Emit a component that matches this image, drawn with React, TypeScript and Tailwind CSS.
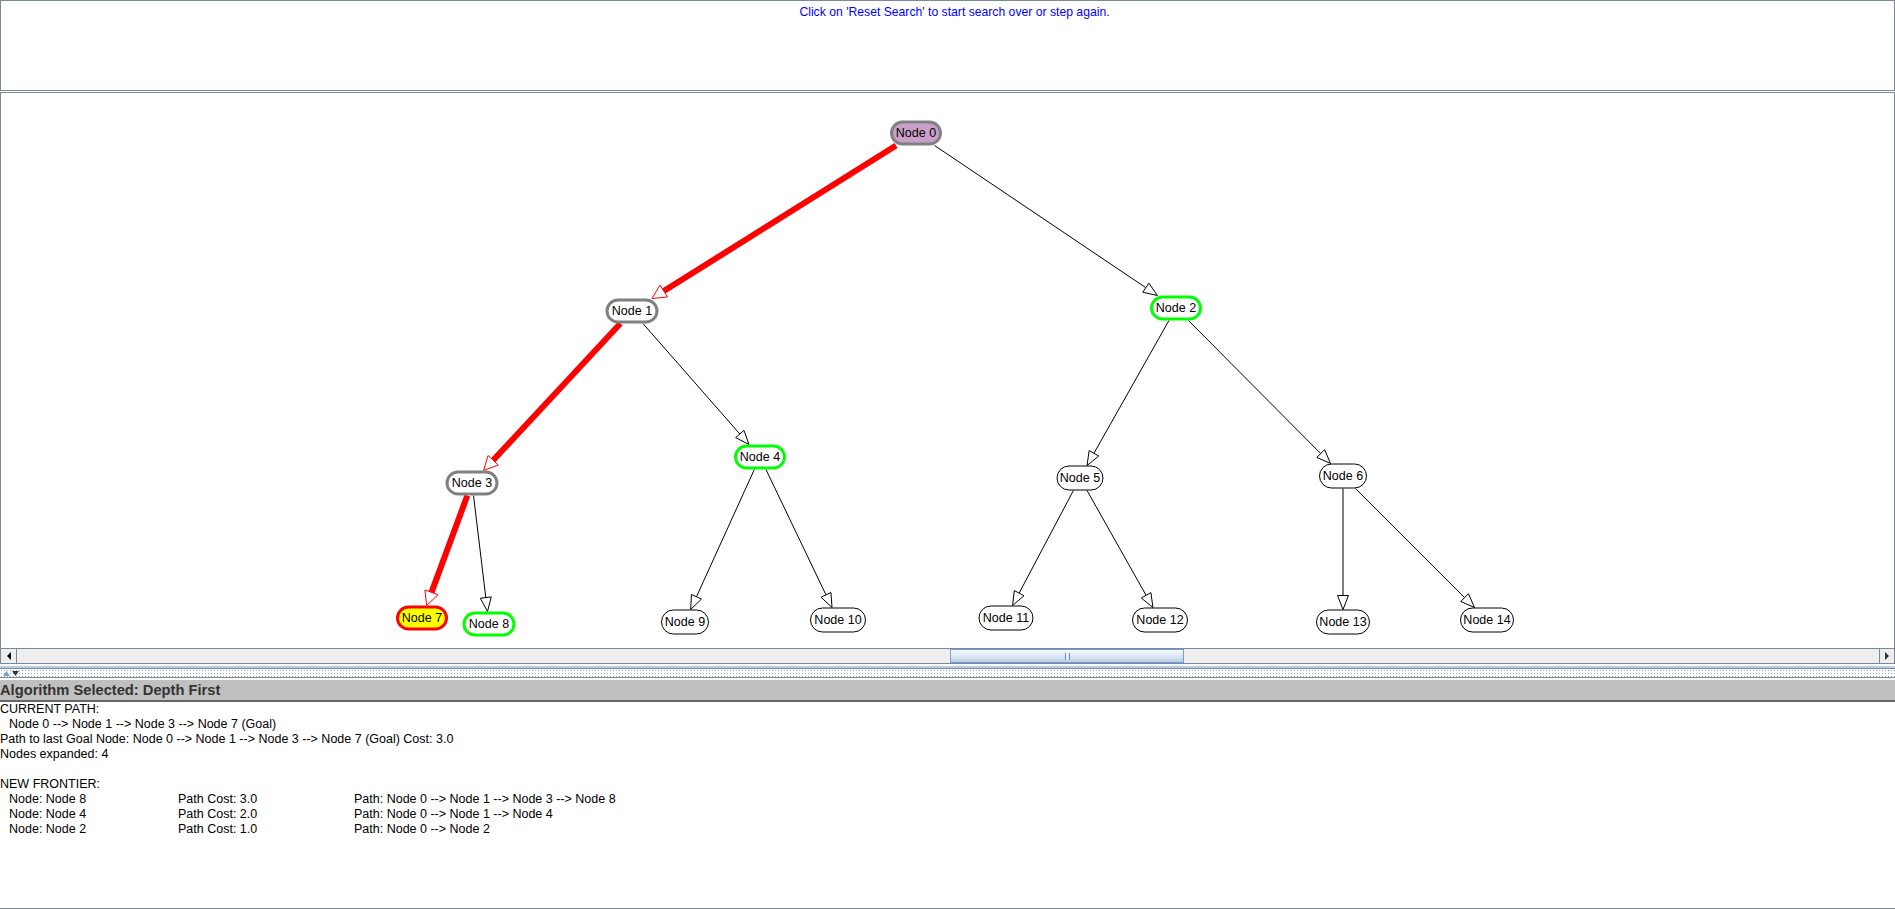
import React from "react";

type Kind = "start" | "visited" | "frontier" | "goal" | "plain";

type TreeNode = {
  id: number;
  x: number;
  y: number;
  w: number;
  kind: Kind;
};

// page coordinates of node centres, canvas inner box starts at (1, 93)
const OX = 1;
const OY = 93;
const NODE_H = 25;

const nodes: TreeNode[] = [
  { id: 0, x: 916, y: 133, w: 52, kind: "start" },
  { id: 1, x: 632, y: 311, w: 53, kind: "visited" },
  { id: 2, x: 1176, y: 308, w: 52, kind: "frontier" },
  { id: 3, x: 472, y: 483, w: 53, kind: "visited" },
  { id: 4, x: 760, y: 457, w: 52, kind: "frontier" },
  { id: 5, x: 1080, y: 478, w: 47, kind: "plain" },
  { id: 6, x: 1343, y: 476, w: 48, kind: "plain" },
  { id: 7, x: 422, y: 618, w: 52, kind: "goal" },
  { id: 8, x: 489, y: 624, w: 53, kind: "frontier" },
  { id: 9, x: 685, y: 622, w: 48, kind: "plain" },
  { id: 10, x: 838, y: 620, w: 56, kind: "plain" },
  { id: 11, x: 1006, y: 618, w: 55, kind: "plain" },
  { id: 12, x: 1160, y: 620, w: 56, kind: "plain" },
  { id: 13, x: 1343, y: 622, w: 54, kind: "plain" },
  { id: 14, x: 1487, y: 620, w: 54, kind: "plain" },
];

const edges: [number, number, boolean][] = [
  [0, 1, true],
  [0, 2, false],
  [1, 3, true],
  [1, 4, false],
  [3, 7, true],
  [3, 8, false],
  [4, 9, false],
  [4, 10, false],
  [2, 5, false],
  [2, 6, false],
  [5, 11, false],
  [5, 12, false],
  [6, 13, false],
  [6, 14, false],
];

const kindClass: Record<Kind, string> = {
  start: "bg-[#c8a0c8] border-[3px] border-[#808080]",
  visited: "bg-white border-[3px] border-[#808080]",
  frontier: "bg-white border-[3px] border-[#00ff00]",
  goal: "bg-[#ffff00] border-[3px] border-[#ff0000]",
  plain: "bg-white border border-black",
};

function clipT(n: TreeNode, dx: number, dy: number) {
  const hw = n.w / 2;
  const hh = NODE_H / 2;
  const tx = dx !== 0 ? hw / Math.abs(dx) : Infinity;
  const ty = dy !== 0 ? hh / Math.abs(dy) : Infinity;
  return Math.min(tx, ty);
}

function Edge({ from, to, red }: { from: TreeNode; to: TreeNode; red: boolean }) {
  const dx = to.x - from.x;
  const dy = to.y - from.y;
  const len = Math.hypot(dx, dy);
  const ux = dx / len;
  const uy = dy / len;
  const ts = clipT(from, dx, dy);
  const te = clipT(to, dx, dy);
  const sx = from.x + ts * dx - OX;
  const sy = from.y + ts * dy - OY;
  const ex = to.x - te * dx - OX;
  const ey = to.y - te * dy - OY;
  const L = 14;
  const W = red ? 7 : 5.5;
  const bx = ex - L * ux;
  const by = ey - L * uy;
  const px = -uy;
  const py = ux;
  const pts = `${ex},${ey} ${bx + W * px},${by + W * py} ${bx - W * px},${by - W * py}`;
  const color = red ? "#ff0000" : "#000000";
  return (
    <g>
      <line x1={sx} y1={sy} x2={bx} y2={by} stroke={color} strokeWidth={red ? 6 : 1} />
      <polygon points={pts} fill="#ffffff" stroke={color} strokeWidth={1} />
    </g>
  );
}

function Node({ n }: { n: TreeNode }) {
  return (
    <div
      className={`absolute flex h-[25px] -translate-x-1/2 -translate-y-1/2 items-center justify-center whitespace-nowrap rounded-full text-[12.5px] text-black ${kindClass[n.kind]}`}
      style={{ left: n.x - OX, top: n.y - OY, width: n.w }}
    >
      Node {n.id}
    </div>
  );
}

function ScrollBar() {
  return (
    <div className="flex h-[15px] shrink-0 border-t border-[#7a8a99] bg-[#eeeeee]">
      <div className="flex w-[16px] items-center justify-center border-r border-[#7a8a99]">
        <svg width="4" height="8" viewBox="0 0 4 8">
          <path d="M4 0 L0 4 L4 8 Z" fill="#000" />
        </svg>
      </div>
      <div className="flex flex-1">
        <div className="ml-[933px] flex w-[234px] items-center justify-center border border-[#7a9cd3] bg-gradient-to-b from-[#f4f8fc] via-[#dfe9f4] to-[#b9cde6]">
          <div className="flex gap-[1px]">
            <div className="h-[7px] w-[1px] bg-[#6d8fc9]" />
            <div className="h-[7px] w-[1px] bg-white" />
            <div className="h-[7px] w-[1px] bg-[#6d8fc9]" />
          </div>
        </div>
      </div>
      <div className="flex w-[15px] items-center justify-center border-l border-[#7a8a99]">
        <svg width="4" height="8" viewBox="0 0 4 8">
          <path d="M0 0 L4 4 L0 8 Z" fill="#333" />
        </svg>
      </div>
    </div>
  );
}

function Divider() {
  return (
    <div className="flex shrink-0 flex-col">
      <div className="h-[2px] bg-white" />
      <div className="h-[2px] bg-[#b8cfe5]" />
      <div className="h-[1px] bg-[#7a8a99]" />
      <div className="flex h-[8px] items-center gap-[2px] bg-white bg-[radial-gradient(circle,#98a4b2_0.7px,transparent_0.9px)] bg-[length:3px_3px] pl-[3px]">
        <svg width="7" height="5" viewBox="0 0 7 5">
          <path d="M0 5 L3.5 0 L7 5 Z" fill="#7a9cd3" />
        </svg>
        <svg width="7" height="5" viewBox="0 0 7 5">
          <path d="M0 0 L3.5 5 L7 0 Z" fill="#1f3c6b" />
        </svg>
      </div>
      <div className="h-[1px] bg-[#7a8a99]" />
      <div className="h-[2px] bg-white" />
    </div>
  );
}

const frontier = [
  ["Node: Node 8", "Path Cost: 3.0", "Path: Node 0 --> Node 1 --> Node 3 --> Node 8"],
  ["Node: Node 4", "Path Cost: 2.0", "Path: Node 0 --> Node 1 --> Node 4"],
  ["Node: Node 2", "Path Cost: 1.0", "Path: Node 0 --> Node 2"],
];

export default function App() {
  const byId = (id: number) => nodes.find((n) => n.id === id)!;
  return (
    <div className="flex h-[909px] w-[1895px] flex-col overflow-hidden bg-white font-['Liberation_Sans',Arial,sans-serif]">
      {/* message panel */}
      <div className="flex h-[91px] shrink-0 justify-center border border-[#7a8a99] pt-[4px] pl-[14px] text-[12.2px] leading-[15px] text-[#0000ff]">
        Click on 'Reset Search' to start search over or step again.
      </div>
      <div className="h-[1px] shrink-0" />

      {/* tree canvas */}
      <div className="flex h-[572px] shrink-0 flex-col border border-[#7a8a99]">
        <div className="relative flex-1 overflow-hidden bg-white">
          <svg className="absolute inset-0 h-full w-full">
            {edges.map(([a, b, red]) => (
              <Edge key={`${a}-${b}`} from={byId(a)} to={byId(b)} red={red} />
            ))}
          </svg>
          {nodes.map((n) => (
            <Node key={n.id} n={n} />
          ))}
        </div>
        <ScrollBar />
      </div>

      <Divider />

      {/* results */}
      <div className="flex h-[22px] shrink-0 items-center border-b-2 border-[#666666] bg-[#c0c0c0] text-[14.7px] font-bold text-[#333333]">
        Algorithm Selected: Depth First
      </div>
      <div className="flex-1 border-b border-[#7a8a99] text-[12.5px] leading-[15px] text-black">
        <div>CURRENT PATH:</div>
        <div className="pl-[9px]">Node 0 --&gt; Node 1 --&gt; Node 3 --&gt; Node 7 (Goal)</div>
        <div>Path to last Goal Node: Node 0 --&gt; Node 1 --&gt; Node 3 --&gt; Node 7 (Goal) Cost: 3.0</div>
        <div>Nodes expanded: 4</div>
        <div className="h-[15px]" />
        <div>NEW FRONTIER:</div>
        {frontier.map((row) => (
          <div key={row[0]} className="grid grid-cols-[169px_176px_1fr] pl-[9px]">
            <span>{row[0]}</span>
            <span>{row[1]}</span>
            <span>{row[2]}</span>
          </div>
        ))}
      </div>
    </div>
  );
}
